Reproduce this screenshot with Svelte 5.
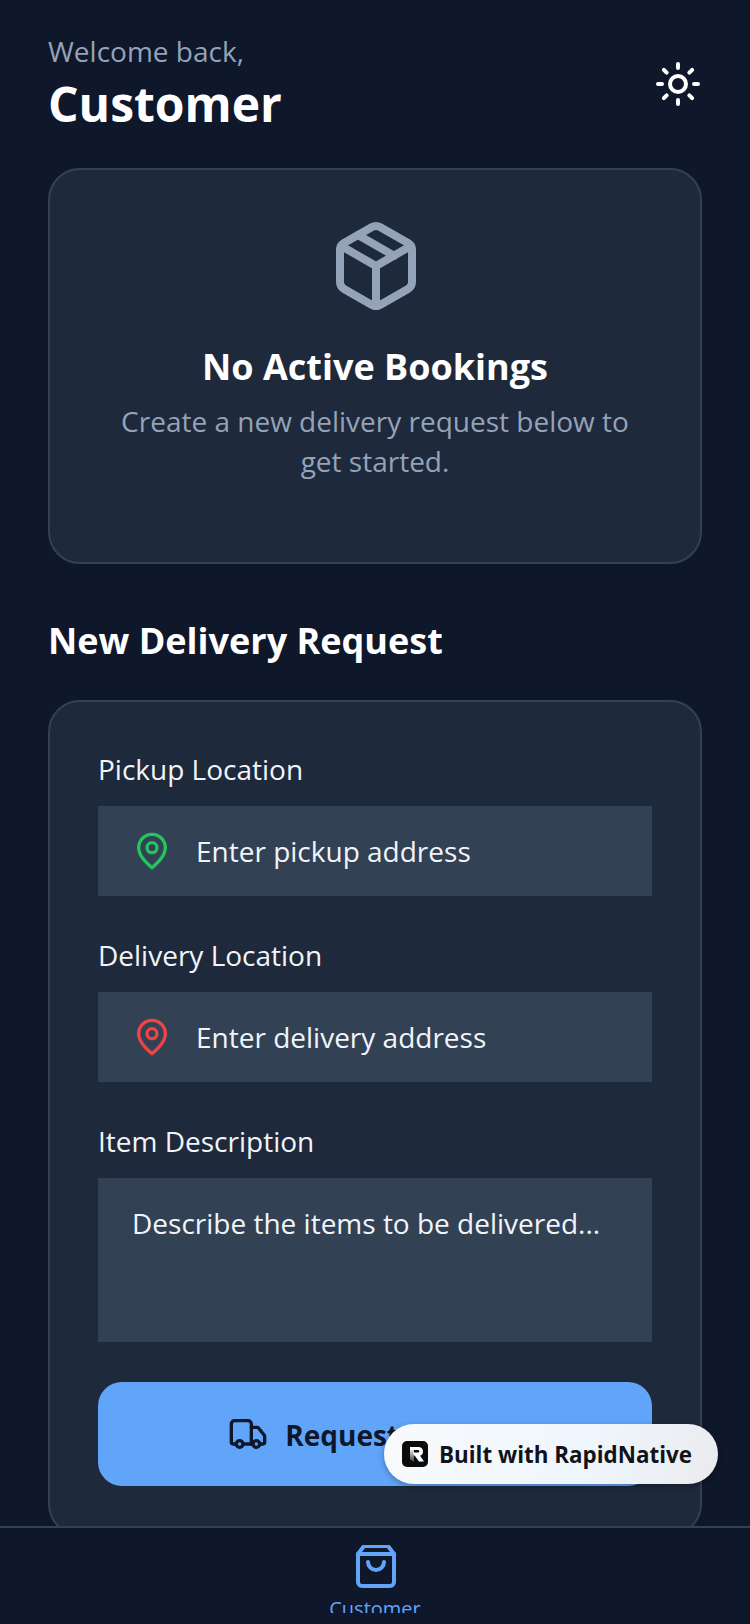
<script>
  let pickup = $state("");
  let delivery = $state("");
  let items = $state("");
</script>

<div class="screen">
  <main class="content">
    <header class="top">
      <div>
        <p class="welcome">Welcome back,</p>
        <h1>Customer</h1>
      </div>
      <button class="theme" type="button" aria-label="Toggle theme">
        <svg width="48" height="48" viewBox="0 0 24 24" fill="none" stroke="#fff" stroke-width="2" stroke-linecap="round" stroke-linejoin="round">
          <circle cx="12" cy="12" r="4" />
          <path d="M12 2v2M12 20v2M4.93 4.93l1.41 1.41M17.66 17.66l1.41 1.41M2 12h2M20 12h2M6.34 17.66l-1.41 1.41M19.07 4.93l-1.41 1.41" />
        </svg>
      </button>
    </header>

    <section class="card empty">
      <svg class="box" width="96" height="96" viewBox="0 0 24 24" fill="none" stroke="#94a3b8" stroke-width="2" stroke-linecap="round" stroke-linejoin="round">
        <path d="M11 21.73a2 2 0 0 0 2 0l7-4A2 2 0 0 0 21 16V8a2 2 0 0 0-1-1.73l-7-4a2 2 0 0 0-2 0l-7 4A2 2 0 0 0 3 8v8a2 2 0 0 0 1 1.73z" />
        <path d="M12 22V12" />
        <path d="m3.3 7 8.7 5 8.7-5" />
        <path d="m7.5 4.27 9 5.15" />
      </svg>
      <h2>No Active Bookings</h2>
      <p>Create a new delivery request below to get started.</p>
    </section>

    <h2 class="section">New Delivery Request</h2>

    <section class="card form">
      <label for="pickup">Pickup Location</label>
      <div class="field">
        <svg width="40" height="40" viewBox="0 0 24 24" fill="none" stroke="#22c55e" stroke-width="2" stroke-linecap="round" stroke-linejoin="round">
          <path d="M20 10c0 6-8 12-8 12s-8-6-8-12a8 8 0 0 1 16 0Z" />
          <circle cx="12" cy="10" r="3" />
        </svg>
        <input id="pickup" placeholder="Enter pickup address" bind:value={pickup} />
      </div>

      <label for="delivery">Delivery Location</label>
      <div class="field">
        <svg width="40" height="40" viewBox="0 0 24 24" fill="none" stroke="#ef4444" stroke-width="2" stroke-linecap="round" stroke-linejoin="round">
          <path d="M20 10c0 6-8 12-8 12s-8-6-8-12a8 8 0 0 1 16 0Z" />
          <circle cx="12" cy="10" r="3" />
        </svg>
        <input id="delivery" placeholder="Enter delivery address" bind:value={delivery} />
      </div>

      <label for="items">Item Description</label>
      <textarea id="items" placeholder="Describe the items to be delivered..." bind:value={items}></textarea>

      <button class="submit" type="button">
        <svg width="40" height="40" viewBox="0 0 24 24" fill="none" stroke="#0f172a" stroke-width="2" stroke-linecap="round" stroke-linejoin="round">
          <path d="M14 18V6a2 2 0 0 0-2-2H4a2 2 0 0 0-2 2v11a1 1 0 0 0 1 1h2" />
          <path d="M15 18H9" />
          <path d="M19 18h2a1 1 0 0 0 1-1v-3.65a1 1 0 0 0-.22-.624l-3.48-4.35A1 1 0 0 0 17.52 8H14" />
          <circle cx="17" cy="18" r="2" />
          <circle cx="7" cy="18" r="2" />
        </svg>
        <span class="submit-label">Request Delivery</span>
      </button>
    </section>
  </main>

  <nav class="tabbar">
    <div class="tab">
      <svg width="48" height="48" viewBox="0 0 24 24" fill="none" stroke="#60a5fa" stroke-width="2" stroke-linecap="round" stroke-linejoin="round">
        <path d="M6 2 3 6v14a2 2 0 0 0 2 2h14a2 2 0 0 0 2-2V6l-3-4Z" />
        <path d="M3 6h18" />
        <path d="M16 10a4 4 0 0 1-8 0" />
      </svg>
      <span>Customer</span>
    </div>
  </nav>

  <div class="badge">
    <svg width="26" height="26" viewBox="0 0 26 26">
      <defs>
        <linearGradient id="stem" x1="0" y1="0" x2="0" y2="1">
          <stop offset="0" stop-color="#fff" />
          <stop offset="1" stop-color="#3a3a3c" />
        </linearGradient>
      </defs>
      <rect width="26" height="26" rx="5" fill="#0b0b0c" />
      <path d="M8 7h4v14l-4-2.5z" fill="url(#stem)" />
      <path d="M8 6h8.5a4.5 4.5 0 0 1 1.6 8.7L22 20.5h-5l-4.4-6H12l-1-3h5a1.2 1.2 0 0 0 0-2.6H8z" fill="#fff" />
    </svg>
    <span>Built with RapidNative</span>
  </div>
</div>

<style>
  :global(body) {
    background: #0f172a;
  }

  .screen {
    position: relative;
    width: 750px;
    height: 1624px;
    display: flex;
    flex-direction: column;
    overflow: hidden;
    background: #0f172a;
    font-family: "Open Sans", sans-serif;
    color: #f8fafc;
  }

  .content {
    flex: 1;
    min-height: 0;
    overflow: hidden;
    padding: 31px 48px 0;
  }

  .top {
    display: flex;
    justify-content: space-between;
    align-items: center;
    margin-bottom: 32px;
  }

  .welcome {
    margin: 0 0 1px;
    font-size: 28px;
    line-height: 40px;
    color: #94a3b8;
  }

  h1 {
    margin: 0;
    font-size: 48px;
    line-height: 64px;
    font-weight: 700;
    color: #fff;
  }

  .theme {
    display: flex;
    padding: 0;
    border: 0;
    background: none;
  }

  .card {
    box-sizing: border-box;
    background: #1e293b;
    border: 2px solid #334155;
    border-radius: 32px;
  }

  .empty {
    height: 396px;
    padding: 48px;
    display: flex;
    flex-direction: column;
    align-items: center;
    text-align: center;
  }

  .box {
    flex: none;
    margin-left: 2px;
  }

  .empty h2 {
    margin: 29px 0 10px;
    font-size: 36px;
    line-height: 48px;
    font-weight: 700;
    color: #fff;
  }

  .empty p {
    margin: 0;
    font-size: 28px;
    line-height: 40px;
    color: #94a3b8;
  }

  .section {
    margin: 53px 0 35px;
    font-size: 36px;
    line-height: 48px;
    font-weight: 700;
    color: #fff;
  }

  .form {
    padding: 47px 48px 48px;
    display: flex;
    flex-direction: column;
  }

  label {
    font-size: 28px;
    line-height: 40px;
    margin-bottom: 17px;
    color: #f1f5f9;
  }

  .field {
    height: 90px;
    margin-bottom: 39px;
    padding-left: 34px;
    display: flex;
    align-items: center;
    gap: 24px;
    background: #334155;
  }

  input,
  textarea {
    border: 0;
    outline: 0;
    background: none;
    font: inherit;
    font-size: 28px;
    line-height: 40px;
    color: #f8fafc;
  }

  input {
    flex: 1;
    min-width: 0;
    padding: 0;
  }

  input::placeholder,
  textarea::placeholder {
    color: #f1f5f9;
    opacity: 1;
  }

  textarea {
    box-sizing: border-box;
    height: 164px;
    margin-bottom: 40px;
    padding: 25px 34px 24px;
    resize: none;
    background: #334155;
  }

  .submit {
    flex: none;
    height: 104px;
    display: flex;
    align-items: center;
    justify-content: center;
    gap: 17px;
    border: 0;
    border-radius: 24px;
    background: #60a5fa;
    color: #0f172a;
    font: inherit;
    font-size: 28px;
    font-weight: 700;
  }

  .submit-label {
    position: relative;
    top: 1px;
  }

  .tabbar {
    flex: none;
    box-sizing: border-box;
    height: 98px;
    border-top: 2px solid #334155;
    padding-top: 17px;
  }

  .tab {
    height: 68px;
    overflow: hidden;
    display: flex;
    flex-direction: column;
    align-items: center;
    color: #60a5fa;
    font-size: 20px;
    line-height: 28px;
  }

  .tab svg {
    flex: none;
    margin: -3px 0 5px 1px;
  }

  .badge {
    position: absolute;
    left: 384px;
    top: 1424px;
    box-sizing: border-box;
    width: 334px;
    height: 60px;
    padding-left: 18px;
    display: flex;
    align-items: center;
    gap: 11px;
    border-radius: 30px;
    background: linear-gradient(100deg, #f8fafc 0%, #eff6fd 60%, #ebebee 100%);
    box-shadow: 0 2px 6px rgba(0, 0, 0, 0.3);
    color: #111318;
    font-size: 22.4px;
    font-weight: 700;
    white-space: nowrap;
  }
</style>
